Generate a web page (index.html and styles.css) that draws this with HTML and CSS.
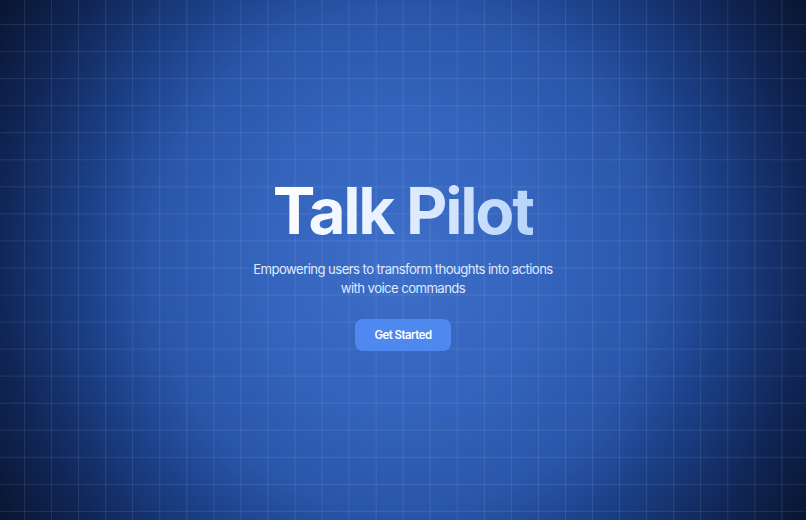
FILE: index.html
```html
<!DOCTYPE html>
<html lang="en">
<head>
<meta charset="utf-8">
<title>Talk Pilot</title>
<link rel="stylesheet" href="styles.css">
</head>
<body>
<main class="hero">
  <div class="grid"></div>
  <section class="content">
    <h1 class="title">Talk Pilot</h1>
    <p class="subtitle">Empowering users to transform thoughts into actions<br>with voice commands</p>
    <a class="cta" href="#">Get Started</a>
  </section>
</main>
</body>
</html>
```
FILE: styles.css
```css
* { box-sizing: border-box; }
html, body { margin: 0; height: 100%; }
body {
  font-family: Inter, "Noto Sans", sans-serif;
  overflow: hidden;
}
.hero {
  position: relative;
  width: 806px;
  height: 520px;
  background: radial-gradient(circle at 50% 50%, #3e6fc9 0px, #3363bb 150px, #2a56aa 250px, #1b4087 320px, #112759 400px, #091530 480px);
  display: flex;
  align-items: center;
  justify-content: center;
}
.grid {
  position: absolute;
  inset: 0;
  background-image:
    linear-gradient(to right, rgba(255,255,255,0.09) 1px, transparent 1px),
    linear-gradient(to bottom, rgba(255,255,255,0.09) 1px, transparent 1px);
  background-size: 27.05px 27.05px;
  background-position: -3px -3px;
}
.content {
  position: relative;
  display: flex;
  flex-direction: column;
  align-items: center;
  text-align: center;
  margin-top: 3px;
}
.title {
  margin: 0;
  font-size: 64px;
  font-weight: 700;
  letter-spacing: -2.3px;
  line-height: 76px;
  background: linear-gradient(to right, #ffffff 0%, #e6f0ff 45%, #b7d3fb 100%);
  -webkit-background-clip: text;
  background-clip: text;
  color: transparent;
}
.subtitle {
  margin: 11px 0 0;
  font-size: 13.2px;
  letter-spacing: -0.6px;
  line-height: 19px;
  color: #dfeaff;
}
.cta {
  margin-top: 21px;
  width: 96px;
  height: 32px;
  display: flex;
  align-items: center;
  justify-content: center;
  background: #4f88ef;
  color: #ffffff;
  border-radius: 8px;
  font-size: 11.4px;
  font-weight: 600;
  letter-spacing: -0.5px;
  text-decoration: none;
}
```
